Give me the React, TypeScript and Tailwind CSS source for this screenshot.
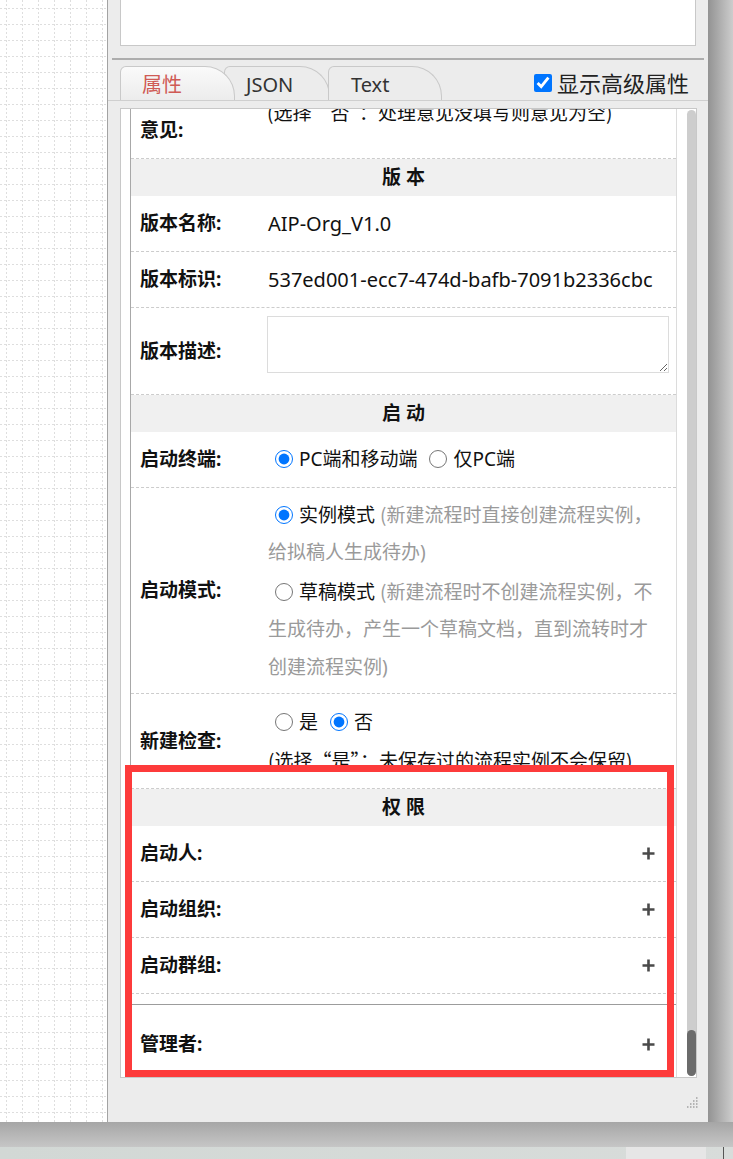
import React from "react";

const cjk = "font-['Noto_Sans_CJK_SC','Noto_Sans',sans-serif]";

function Radio({ name, checked }: { name: string; checked?: boolean }) {
  return (
    <input
      type="radio"
      name={name}
      defaultChecked={checked}
      className="w-[18px] h-[18px] ml-[7px] mr-[6px] my-0 align-[-2px] accent-[#0075ff]"
    />
  );
}

function PlusIcon() {
  return (
    <svg width="13" height="13" viewBox="0 0 13 13">
      <path d="M6.5 0.5v12M0.5 6.5h12" stroke="#4a4a4a" strokeWidth="2.6" />
    </svg>
  );
}

function Header({ title }: { title: string }) {
  return (
    <div className="h-[37px] shrink-0 bg-[#f0f0f0] flex items-center justify-center font-bold text-[19px] text-[#111] whitespace-pre">
      {title}
    </div>
  );
}

function Row({ label, children, h = "h-[56px]", valueClass = "" }: any) {
  return (
    <div className={"flex shrink-0 border-b border-dashed border-[#cccccc] " + h}>
      <div className="w-[128px] shrink-0 pl-[9px] flex items-center font-bold text-[19px] text-[#111]">
        {label}
      </div>
      <div className={"flex-1 pl-[9px] pr-[7px] flex flex-col justify-center text-[19px] text-[#111] whitespace-nowrap " + valueClass}>
        {children}
      </div>
    </div>
  );
}

function PermRow({ label }: { label: string }) {
  return (
    <div className="h-[56px] shrink-0 flex items-center border-b border-dashed border-[#cccccc]">
      <div className="w-[128px] shrink-0 pl-[9px] font-bold text-[19px] text-[#111]">{label}</div>
      <div className="flex-1" />
      <div className="pr-[21px] flex items-center">
        <PlusIcon />
      </div>
    </div>
  );
}

function GridCanvas() {
  return (
    <svg width="107" height="1122" className="block shrink-0">
      <defs>
        <pattern id="grid" width="16" height="16" patternUnits="userSpaceOnUse">
          <path d="M6.5 0V16" stroke="#dedede" strokeDasharray="2 2" />
          <path d="M0 8.5H16" stroke="#dedede" strokeDasharray="2 2" />
        </pattern>
      </defs>
      <rect width="107" height="1122" fill="#ffffff" />
      <rect width="107" height="1122" fill="url(#grid)" />
    </svg>
  );
}

function Grip() {
  const dots = [
    [10, 2],
    [7, 5],
    [10, 5],
    [4, 8],
    [7, 8],
    [10, 8],
    [1, 11],
    [4, 11],
    [7, 11],
    [10, 11],
  ];
  return (
    <svg width="13" height="14" viewBox="0 0 13 14">
      {dots.map(([x, y], i) => (
        <rect key={i} x={x} y={y} width="1.5" height="2" fill="#b4b4b4" />
      ))}
    </svg>
  );
}

export default function App() {
  return (
    <div className="w-[733px] h-[1159px] overflow-hidden relative flex flex-col bg-[#c4c4c4] font-['Noto_Sans','Noto_Sans_CJK_SC',sans-serif]">
      <div className="flex h-[1122px] shrink-0">
        <GridCanvas />

        <div className="w-[601px] shrink-0 border-l border-[#a3a3a3] bg-[#ececec] flex flex-col">
          {/* top box */}
          <div className="ml-[12px] w-[576px] h-[46px] shrink-0 bg-white border border-t-0 border-[#c8c8c8]" />
          <div className="mt-[12px] mx-[4px] h-[2px] shrink-0 bg-[#adadad]" />

          {/* tabs */}
          <div className="mt-[6px] h-[35px] shrink-0 flex border-b border-[#cfcfcf] pl-[12px]">
            <div className="relative z-[3] w-[115px] h-[34px] border border-b-0 border-[#c9c9c9] rounded-tl-[6px] rounded-tr-[30px] bg-gradient-to-b from-[#fafafa] to-[#ececec] pl-[21px] leading-[36px] text-[20px] text-[#cf5a55]">
              属性
            </div>
            <div className="relative z-[1] -ml-[11px] w-[106px] h-[34px] border border-b-0 border-[#c9c9c9] rounded-tl-[6px] rounded-tr-[30px] bg-[#ececec] pl-[21px] leading-[36px] text-[20px] text-[#333]">
              JSON
            </div>
            <div className="relative z-[2] -ml-[2px] w-[114px] h-[34px] border border-b-0 border-[#c9c9c9] rounded-tl-[6px] rounded-tr-[30px] bg-[#ececec] pl-[22px] leading-[36px] text-[20px] text-[#333]">
              Text
            </div>
            <div className="ml-auto mr-[19px] flex items-center pb-[1px]">
              <input type="checkbox" defaultChecked className="w-[18px] h-[18px] mr-[5px] accent-[#0075ff]" />
              <span className={"text-[22px] text-[#222] " + cjk}>显示高级属性</span>
            </div>
          </div>

          {/* content box */}
          <div className="mt-[7px] ml-[12px] w-[577px] h-[970px] shrink-0 bg-white border border-[#c8c8c8] flex">
            <div className="ml-[9px] w-[547px] h-full overflow-hidden flex flex-col border-l border-r border-l-[#a8a8a8] border-r-[#dcdcdc]">
              {/* partially scrolled row */}
              <div className="-mt-[11px] h-[61px] shrink-0 flex border-b border-dashed border-[#cccccc]">
                <div className="w-[128px] shrink-0 pl-[9px] flex items-end pb-[9px] leading-[37px] font-bold text-[19px] text-[#111]">
                  意见:
                </div>
                <div className={"flex-1 pl-[8px] leading-[28px] text-[19px] text-[#111] whitespace-nowrap " + cjk}>
                  (选择“否”：处理意见没填写则意见为空)
                </div>
              </div>

              <Header title="版 本" />
              <Row label="版本名称:">
                <span className="text-[20px]">AIP-Org_V1.0</span>
              </Row>
              <Row label="版本标识:">
                <span className="text-[20px]">537ed001-ecc7-474d-bafb-7091b2336cbc</span>
              </Row>
              <div className="h-[87px] shrink-0 flex border-b border-dashed border-[#cccccc]">
                <div className="w-[128px] shrink-0 pl-[9px] flex items-center font-bold text-[19px] text-[#111]">
                  版本描述:
                </div>
                <div className="flex-1 pl-[8px] pr-[7px] pt-[8px]">
                  <textarea readOnly className="block w-full h-[57px] border border-[#dcdcdc] bg-white outline-none" />
                </div>
              </div>

              <Header title="启 动" />
              <Row label="启动终端:">
                <div>
                  <Radio name="term" checked />
                  PC端和移动端 <Radio name="term" />
                  仅PC端
                </div>
              </Row>
              <Row label="启动模式:" h="h-[206px]" valueClass="leading-[37.5px]">
                <div>
                  <Radio name="mode" checked />
                  实例模式 <span className={"text-[#9a9a9a] " + cjk}>(新建流程时直接创建流程实例，</span>
                </div>
                <div className="text-[#9a9a9a]">给拟稿人生成待办)</div>
                <div>
                  <Radio name="mode" />
                  草稿模式 <span className={"text-[#9a9a9a] " + cjk}>(新建流程时不创建流程实例，不</span>
                </div>
                <div className="text-[#9a9a9a]">生成待办，产生一个草稿文档，直到流转时才</div>
                <div className="text-[#9a9a9a]">创建流程实例)</div>
              </Row>
              <Row label="新建检查:" h="h-[95px]" valueClass="leading-[37.5px]">
                <div>
                  <Radio name="check" />是 <Radio name="check" checked />否
                </div>
                <div className={cjk}>(选择“是”：未保存过的流程实例不会保留)</div>
              </Row>

              <Header title="权 限" />
              <PermRow label="启动人:" />
              <PermRow label="启动组织:" />
              <PermRow label="启动群组:" />
              <div className="h-[10px] shrink-0" />
              <div className="h-[80px] shrink-0 border-t border-[#9c9c9c] flex items-center">
                <div className="w-[128px] shrink-0 pl-[9px] font-bold text-[19px] text-[#111]">管理者:</div>
                <div className="flex-1" />
                <div className="pr-[21px] flex items-center">
                  <PlusIcon />
                </div>
              </div>
            </div>
            <div className="w-[10px] shrink-0" />
            <div className="w-[9px] shrink-0 my-[1px] rounded-full bg-[#cdcdcd] flex flex-col justify-end">
              <div className="h-[46px] rounded-full bg-[#6b6b6b]" />
            </div>
          </div>

          <div className="flex-1 flex justify-end items-end pr-[9px] pb-[13px]">
            <Grip />
          </div>
        </div>

        <div className="flex-1 bg-gradient-to-r from-[#939393] to-[#cdcdcd]" />
      </div>

      <div className="h-[25px] shrink-0 bg-gradient-to-b from-[#a6a6a6] to-[#c6c6c6]" />
      <div className="h-[12px] shrink-0 flex bg-gradient-to-r from-[#d2d8d5] to-[#d8dcda]">
        <div className="w-[626px]" />
        <div className="w-[80px] bg-[#e6e6e6]" />
        <div className="w-[17px]" />
        <div className="w-[1px] bg-[#555]" />
      </div>

      {/* red annotation box */}
      <div className="absolute left-[125px] top-[765px] w-[549px] h-[312px] border-[7px] border-[#fd3b3b] pointer-events-none" />
    </div>
  );
}
